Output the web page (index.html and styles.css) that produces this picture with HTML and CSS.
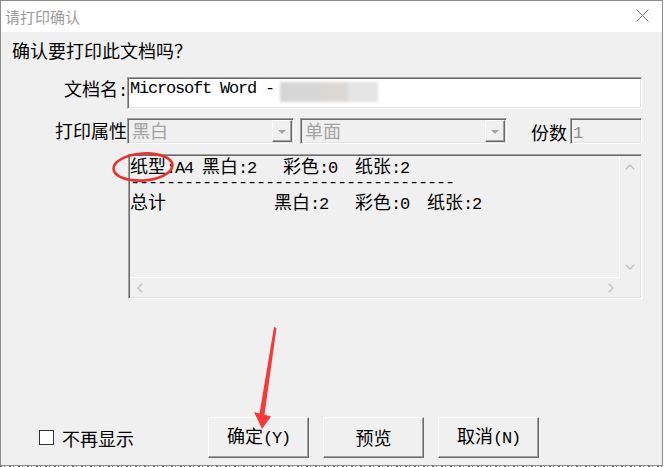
FILE: index.html
```html
<!DOCTYPE html>
<html lang="zh-CN">
<head>
<meta charset="utf-8">
<title>请打印确认</title>
<link rel="stylesheet" href="styles.css">
</head>
<body>
<div class="window">
  <div class="titlebar">
    <span class="title">请打印确认</span>
    <svg class="close" width="13" height="13" viewBox="0 0 13 13"><path d="M0.5 0.5 L12.5 12.5 M12.5 0.5 L0.5 12.5" stroke="#7a7a7a" stroke-width="1" fill="none"/></svg>
  </div>
  <div class="client">
    <div class="prompt">确认要打印此文档吗？</div>

    <div class="row row-name">
      <span class="lbl">文档名<span class="m">:</span></span>
      <div class="edit edit-name"><span class="m">Microsoft Word - </span><span class="redact"><i class="r1"></i><i class="r2"></i><i class="r3"></i></span></div>
    </div>

    <div class="row row-attr">
      <span class="lbl lbl-attr">打印属性</span>
      <div class="combo combo-color">
        <span class="combo-text">黑白</span>
        <span class="combo-btn"><i class="tri"></i></span>
      </div>
      <div class="combo combo-side">
        <span class="combo-text">单面</span>
        <span class="combo-btn"><i class="tri"></i></span>
      </div>
      <span class="lbl-copies">份数</span>
      <div class="edit edit-copies"><span class="m">1</span></div>
    </div>

    <div class="listbox">
      <div class="list-content">
        <div class="line">纸型<span class="m">:A4 </span>黑白<span class="m">:2   </span>彩色<span class="m">:0  </span>纸张<span class="m">:2</span></div>
        <div class="line"><span class="m dash">------------------------------------</span></div>
        <div class="line">总计<span class="m">            </span>黑白<span class="m">:2   </span>彩色<span class="m">:0  </span>纸张<span class="m">:2</span></div>
      </div>
      <div class="vscroll">
        <span class="sbtn sbtn-v"><svg width="10" height="6" viewBox="0 0 10 6"><polyline points="0.8,5.2 5,1 9.2,5.2" fill="none" stroke="#c0c0c0" stroke-width="1.4"/></svg></span>
        <span class="sbtn sbtn-v"><svg width="10" height="6" viewBox="0 0 10 6"><polyline points="0.8,0.8 5,5 9.2,0.8" fill="none" stroke="#c0c0c0" stroke-width="1.4"/></svg></span>
      </div>
      <div class="hscroll">
        <span class="sbtn sbtn-h"><svg width="6" height="10" viewBox="0 0 6 10"><polyline points="5.2,0.8 1,5 5.2,9.2" fill="none" stroke="#c0c0c0" stroke-width="1.4"/></svg></span>
        <span class="sbtn sbtn-h"><svg width="6" height="10" viewBox="0 0 6 10"><polyline points="0.8,0.8 5,5 0.8,9.2" fill="none" stroke="#c0c0c0" stroke-width="1.4"/></svg></span>
      </div>
      <div class="corner"></div>
    </div>

    <div class="bottom">
      <label class="check"><span class="box"></span><span class="check-text">不再显示</span></label>
      <div class="buttons">
        <button class="btn">确定<span class="m">(Y)</span></button>
        <button class="btn">预览</button>
        <button class="btn">取消<span class="m">(N)</span></button>
      </div>
    </div>
  </div>

  <svg class="annot" width="664" height="467" viewBox="0 0 664 467">
    <ellipse cx="143" cy="167" rx="29.5" ry="13.5" transform="rotate(-4 143 167)" fill="none" stroke="#ec302d" stroke-width="2.6"/>
    <polygon points="274,327 276.5,328 264.5,414.5 271,416.5 262,429 254,412 259.5,413.5" fill="#f53a38"/>
  </svg>
</div>
<div class="desk-strip"></div>
</body>
</html>
```
FILE: styles.css
```css
* { box-sizing: border-box; }

html, body {
  margin: 0;
  padding: 0;
  background: #ffffff;
  font-family: "Noto Sans CJK SC", "Noto Sans", sans-serif;
}

.window {
  position: relative;
  width: 663px;
  height: 466px;
  border: 1px solid #8c8c8c;
  background: #f0f0f0;
  display: flex;
  flex-direction: column;
}

.titlebar {
  height: 31px;
  flex: 0 0 31px;
  background: #ffffff;
  display: flex;
  align-items: center;
  justify-content: space-between;
  padding: 0 13px 0 4px;
}

.title {
  font-size: 15px;
  line-height: 31px;
  color: #9b9b9b;
}

.close { display: block; margin-top: -2px; }

.client {
  flex: 1;
  display: flex;
  flex-direction: column;
  padding: 9px 0 0 0;
  font-size: 18px;
  line-height: 18px;
  color: #000;
}

.m {
  font-family: "Liberation Mono", monospace;
  font-size: 17px;
  letter-spacing: -1.2px;
  white-space: pre;
}

.dash { vertical-align: 4px; }

.prompt {
  height: 18px;
  padding-left: 11px;
}

.row {
  display: flex;
  align-items: flex-start;
}

.lbl {
  flex: 0 0 126px;
  text-align: right;
  white-space: nowrap;
}

.row-name { margin-top: 18px; }
.row-name .lbl { margin-top: 2px; }

.edit {
  border: 1px solid;
  border-color: #a0a0a0 #ffffff #ffffff #a0a0a0;
  box-shadow: inset 1px 1px #696969, inset -1px -1px #e3e3e3;
}

.edit-name {
  width: 515px;
  height: 32px;
  background: #ffffff;
  padding: 2px 1px 0 2px;
  display: flex;
  align-items: flex-start;
}

.redact {
  display: inline-flex;
  height: 20px;
  margin-top: 2px;
  margin-left: -3px;
  filter: blur(1.6px);
}
.redact i { display: block; height: 20px; }
.redact .r1 { width: 40px; background: #d6d6d6; }
.redact .r2 { width: 28px; background: #dcd8d4; }
.redact .r3 { width: 30px; background: #e4e4e4; }

.row-attr { margin-top: 9px; }
.lbl-attr { margin-top: 3px; }

.combo {
  height: 26px;
  display: flex;
  align-items: stretch;
  background: #f0f0f0;
  border: 1px solid;
  border-color: #a0a0a0 #ffffff #ffffff #a0a0a0;
  box-shadow: inset 1px 1px #696969, inset -1px -1px #e3e3e3;
  padding: 1px;
}

.combo-color { width: 167px; }
.combo-side { width: 207px; margin-left: 6px; }

.combo-text {
  flex: 1;
  padding: 1px 0 0 3px;
  color: #a3a3a3;
}

.combo-btn {
  flex: 0 0 20px;
  height: 22px;
  border: 1px solid;
  border-color: #ffffff #696969 #696969 #ffffff;
  box-shadow: inset -1px -1px #a0a0a0;
  display: flex;
  align-items: center;
  justify-content: center;
}

.tri {
  width: 0;
  height: 0;
  border-left: 4px solid transparent;
  border-right: 4px solid transparent;
  border-top: 4px solid #a6a6a6;
  margin-top: 1px;
}

.lbl-copies {
  margin: 5px 3px 0 24px;
  white-space: nowrap;
}

.edit-copies {
  width: 72px;
  height: 26px;
  background: #f0f0f0;
  padding: 2px 0 0 2px;
  color: #8f8f8f;
}

.listbox {
  margin: 10px 0 0 127px;
  width: 514px;
  height: 145px;
  background: #f0f0f0;
  border: 1px solid;
  border-color: #a0a0a0 #ffffff #ffffff #a0a0a0;
  box-shadow: inset 1px 1px #696969, inset -1px -1px #e3e3e3;
  padding: 1px;
  display: grid;
  grid-template-columns: 1fr 20px;
  grid-template-rows: 122px 19px;
}

.list-content {
  border-right: 1px solid #ffffff;
  border-bottom: 1px solid #ffffff;
}

.line { height: 18px; white-space: pre; }

.vscroll {
  display: flex;
  flex-direction: column;
  justify-content: space-between;
}

.hscroll {
  display: flex;
  justify-content: space-between;
}

.sbtn {
  display: flex;
  align-items: center;
  justify-content: center;
}
.sbtn-v { width: 20px; height: 22px; }
.sbtn-h { width: 19px; height: 19px; }
.sbtn svg { display: block; }

.bottom {
  margin-top: 118px;
  height: 41px;
  display: flex;
  align-items: center;
}

.check {
  flex: 0 0 207px;
  display: flex;
  align-items: center;
  padding-left: 38px;
}

.box {
  width: 15px;
  height: 15px;
  background: #ffffff;
  border: 1px solid #333333;
}

.check-text { margin-left: 8px; }

.buttons {
  display: flex;
  gap: 14px;
}

.btn {
  width: 101px;
  height: 41px;
  margin: 0;
  padding: 0 0 1px 0;
  background: #f0f0f0;
  border: 1px solid;
  border-color: #ffffff #696969 #696969 #ffffff;
  box-shadow: inset -1px -1px #a0a0a0;
  font-family: "Noto Sans CJK SC", "Noto Sans", sans-serif;
  font-size: 18px;
  line-height: 18px;
  color: #000;
}

.annot {
  position: absolute;
  left: -1px;
  top: -1px;
  pointer-events: none;
}

.desk-strip {
  width: 664px;
  height: 1px;
  background: repeating-linear-gradient(90deg, #555 0 2px, #ffffff 2px 4px, #777 4px 5px, #ffffff 5px 9px);
}
```
